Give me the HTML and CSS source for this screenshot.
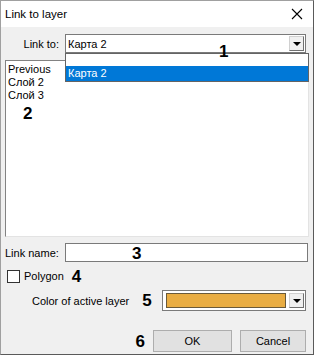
FILE: index.html
```html
<!DOCTYPE html>
<html lang="en">
<head>
    <meta charset="UTF-8">
    <title>Link to layer</title>
    <link rel="stylesheet" href="styles.css">
</head>
<body>
    <div class="window">
        <div class="titlebar">
            <span class="title">Link to layer</span>
            <svg class="close" width="12" height="12" viewBox="0 0 12 12">
                <path d="M1 1 L11 11 M11 1 L1 11" stroke="#000" stroke-width="1.1" fill="none"/>
            </svg>
        </div>
        <div class="content">
            <div class="row link-row">
                <span class="label">Link to:</span>
                <div class="combo">
                    <span class="combo-text">Карта 2</span>
                    <span class="arrow-btn"><span class="arrow"></span></span>
                    <span class="mark mark-1">1</span>
                    <div class="drop-list">
                        <div class="drop-item selected">Карта 2</div>
                    </div>
                </div>
            </div>

            <div class="listbox">
                <div class="list-item">Previous</div>
                <div class="list-item">Слой 2</div>
                <div class="list-item">Слой 3</div>
                <span class="mark mark-2">2</span>
            </div>

            <div class="row name-row">
                <span class="label">Link name:</span>
                <div class="textbox">
                    <span class="mark mark-3">3</span>
                </div>
            </div>

            <div class="row check-row">
                <span class="checkbox"></span>
                <span>Polygon</span>
                <span class="mark">4</span>
            </div>

            <div class="row color-row">
                <span>Color of active layer</span>
                <span class="mark">5</span>
                <div class="color-combo">
                    <span class="swatch"></span>
                    <span class="arrow-btn"><span class="arrow"></span></span>
                </div>
            </div>

            <div class="row button-row">
                <span class="mark">6</span>
                <button class="btn btn-ok">OK</button>
                <button class="btn btn-cancel">Cancel</button>
            </div>
        </div>
    </div>
</body>
</html>
```

FILE: styles.css
```css
body {
    margin: 0;
    font-family: "Liberation Sans", Arial, sans-serif;
    font-size: 11px;
    color: #000;
    background: #fff;
}

.window {
    width: 314px;
    height: 355px;
    box-sizing: border-box;
    border-left: 1px solid #a0a0a0;
    border-right: 1px solid #5a5a5a;
    border-bottom: 1px solid #5a5a5a;
    border-top: 1px solid #a0a0a0;
    background: #f0f0f0;
    display: flex;
    flex-direction: column;
}

.titlebar {
    height: 26px;
    background: #fff;
    display: flex;
    align-items: center;
    justify-content: space-between;
    padding: 0 10px 0 4px;
}

.title {
    font-size: 11.5px;
}

.content {
    position: relative;
    padding: 7px 4px 0 4px;
    display: flex;
    flex-direction: column;
}

.row {
    display: flex;
    align-items: center;
}

.link-row {
    height: 19px;
}

.link-row .label {
    width: 54px;
    text-align: right;
    margin-right: 6px;
}

.combo {
    position: relative;
    flex: 1;
    height: 19px;
    box-sizing: border-box;
    border: 1px solid #7a7a7a;
    background: #fff;
    display: flex;
    align-items: center;
    margin-right: 3px;
}

.combo-text {
    flex: 1;
    padding-left: 2px;
}

.arrow-btn {
    width: 15px;
    height: 15px;
    margin-right: 1px;
    box-sizing: border-box;
    background: #f0f0f0;
    border: 1px solid #d0d0d0;
    border-right-color: #707070;
    border-bottom-color: #707070;
    display: flex;
    align-items: center;
    justify-content: center;
}

.arrow {
    width: 0;
    height: 0;
    border-left: 4px solid transparent;
    border-right: 4px solid transparent;
    border-top: 4px solid #000;
}

.drop-list {
    position: absolute;
    left: -1px;
    top: 18px;
    right: -4px;
    height: 29px;
    box-sizing: border-box;
    border: 1px solid #646464;
    background: #fff;
    z-index: 2;
    padding-top: 12px;
}

.drop-item {
    height: 15px;
    line-height: 15px;
    padding-left: 2px;
}

.drop-item.selected {
    background: #0078d7;
    color: #fff;
}

.listbox {
    position: relative;
    margin-top: 7px;
    height: 177px;
    box-sizing: border-box;
    border: 1px solid #828282;
    border-right-color: #e3e3e3;
    border-bottom-color: #e3e3e3;
    background: #fff;
    padding: 2px 0 0 2px;
}

.list-item {
    height: 13px;
    line-height: 13px;
}

.mark {
    font-family: "Liberation Sans", Arial, sans-serif;
    font-weight: bold;
    font-size: 17px;
    line-height: 17px;
}

.mark-1 {
    position: absolute;
    left: 153px;
    top: 8px;
    z-index: 3;
}

.mark-2 {
    position: absolute;
    left: 17px;
    top: 44px;
}

.mark-3 {
    position: absolute;
    left: 66px;
    top: 1px;
}

.name-row {
    margin-top: 6px;
    height: 19px;
}

.name-row .label {
    width: 60px;
}

.textbox {
    position: relative;
    flex: 1;
    height: 19px;
    box-sizing: border-box;
    border: 1px solid #7a7a7a;
    background: #fff;
    margin-right: 1px;
}

.check-row {
    margin-top: 7px;
    height: 14px;
    padding-left: 2px;
}

.checkbox {
    width: 13px;
    height: 13px;
    box-sizing: border-box;
    border: 1px solid #333;
    background: #fff;
    margin-right: 4px;
}

.check-row .mark {
    margin-left: 8px;
}

.color-row {
    margin-top: 7px;
    height: 21px;
    padding-left: 27px;
}

.color-row .mark {
    margin-left: 13px;
}

.color-combo {
    margin-left: auto;
    margin-right: 3px;
    width: 144px;
    height: 21px;
    box-sizing: border-box;
    border: 1px solid #7a7a7a;
    background: #fff;
    display: flex;
    align-items: center;
    padding-left: 3px;
}

.swatch {
    flex: 1;
    height: 13px;
    background: #e9ad43;
    border: 1px solid #6a5a3a;
    margin-right: 3px;
}

.button-row {
    margin-top: 19px;
    justify-content: flex-end;
    padding-right: 3px;
}

.button-row .mark {
    margin-right: 8px;
}

.btn {
    height: 22px;
    font-family: "Liberation Sans", Arial, sans-serif;
    font-size: 11px;
    background: #e1e1e1;
    border: 1px solid #adadad;
    padding: 0;
}

.btn-ok {
    width: 79px;
    margin-right: 8px;
}

.btn-cancel {
    width: 66px;
}
```
